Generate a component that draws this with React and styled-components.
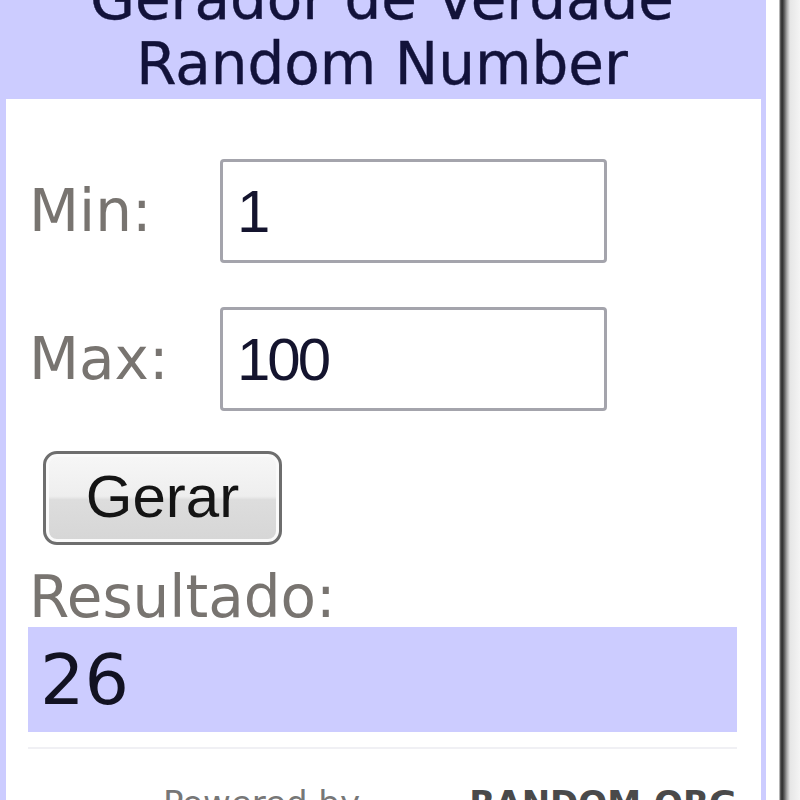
import React from 'react';
import styled, { createGlobalStyle } from 'styled-components';

const GlobalStyle = createGlobalStyle`
    html, body {
        margin: 0;
        padding: 0;
        background: #fff;
        overflow: hidden;
    }
`;

export default function App() {
    return (
        <>
            <GlobalStyle />
            <Page>
                <Widget>
                    <Header>
                        Gerador de Verdade
                        <br />
                        Random Number
                    </Header>
                    <Body>
                        <Form>
                            <Label htmlFor='min'>Min:</Label>
                            <Input id='min' defaultValue='1' />
                            <Label htmlFor='max'>Max:</Label>
                            <Input id='max' defaultValue='100' />
                        </Form>
                        <Button type='button'>Gerar</Button>
                        <ResultLabel>Resultado:</ResultLabel>
                        <Result>26</Result>
                        <Rule />
                        <Footer>
                            <span>Powered by</span>
                            <Brand>RANDOM.ORG</Brand>
                        </Footer>
                    </Body>
                </Widget>
                <PageEdge />
            </Page>
        </>
    );
}

const Page = styled.div`
    display: flex;
    align-items: stretch;
    width: 800px;
    height: 880px;
    margin-top: -41px;
`;

const Widget = styled.div`
    width: 766px;
    flex-shrink: 0;
    display: flex;
    flex-direction: column;
    box-sizing: border-box;
    border-left: 6px solid #ccccff;
    border-right: 5px solid #ccccff;
    background: #fff;
`;

const PageEdge = styled.div`
    flex: 1;
    background: linear-gradient(
        to right,
        #fff 0,
        #fff 13px,
        #6a6a6a 14px,
        #2a2a2a 16px,
        #555 18px,
        #aaa 21px,
        #e6e6e6 24px,
        #f4f4f4 100%
    );
`;

const Header = styled.div`
    background: #ccccff;
    margin-left: -6px;
    margin-right: -3px;
    padding: 8px 0 2px;
    text-align: center;
    font-family: 'DejaVu Sans', Verdana, sans-serif;
    font-size: 58px;
    line-height: 65px;
    color: #12123a;
    -webkit-text-stroke: 0.4px #12123a;
`;

const Body = styled.div`
    display: flex;
    flex-direction: column;
    align-items: flex-start;
    padding: 60px 24px 0 22px;
    font-family: 'DejaVu Sans', Verdana, sans-serif;
`;

const Form = styled.div`
    display: grid;
    grid-template-columns: 192px 387px;
    row-gap: 44px;
    align-items: center;
`;

const Label = styled.label`
    font-size: 58px;
    color: #787470;
    padding-left: 1px;
`;

const Input = styled.input`
    box-sizing: border-box;
    width: 387px;
    height: 104px;
    margin: 0;
    padding: 0 0 0 14px;
    border: 3px solid #a4a4ac;
    border-radius: 4px;
    background: #fff;
    font-family: 'Liberation Sans', Arial, sans-serif;
    font-size: 60px;
    letter-spacing: -3px;
    color: #14142e;
    outline: none;
`;

const Button = styled.button`
    box-sizing: border-box;
    width: 239px;
    height: 94px;
    margin: 40px 0 0 15px;
    padding: 0 0 4px;
    border: 3px solid #6e6e6e;
    border-radius: 14px;
    background: linear-gradient(#f7f7f7 0%, #eeeeee 48%, #dddddd 52%, #d6d6d6 100%);
    box-shadow: inset 0 0 0 3px #fafafa;
    font-family: 'Liberation Sans', Arial, sans-serif;
    font-size: 60px;
    color: #141414;
`;

const ResultLabel = styled.div`
    margin-top: 22px;
    padding-left: 1px;
    font-size: 58px;
    line-height: 60px;
    color: #787470;
`;

const Result = styled.div`
    box-sizing: border-box;
    align-self: stretch;
    height: 105px;
    padding-left: 12px;
    display: flex;
    align-items: center;
    background: #ccccff;
    font-size: 70px;
    color: #121222;
`;

const Rule = styled.div`
    align-self: stretch;
    margin-top: 15px;
    border-top: 2px solid #f0f0f4;
`;

const Footer = styled.div`
    align-self: stretch;
    display: flex;
    justify-content: space-between;
    margin-top: 34px;
    padding-left: 135px;
    font-size: 34px;
    color: #777;
`;

const Brand = styled.span`
    font-weight: bold;
    color: #4a4a4a;
`;
